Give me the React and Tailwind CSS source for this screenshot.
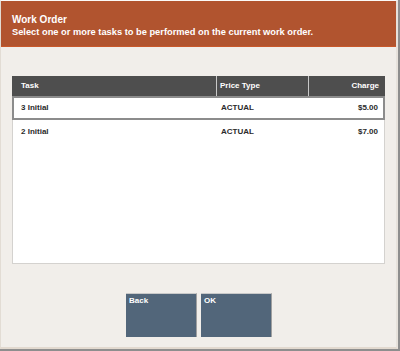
export default function App() {
  const font = { fontFamily: '"Liberation Sans", Arial, sans-serif' };
  return (
    <div className="w-[400px] h-[351px] bg-[#8e8e8e] flex" style={font}>
      <div className="w-[398px] h-[349px] flex flex-col bg-[#f1eeea] border-t border-t-[#fbfaf8] border-l border-l-[#e2dcd4] border-r-2 border-r-[#e7e2dc] border-b-2 border-b-[#e2d9cf]">
        <div className="h-[46px] bg-[#b1542f] border-b border-b-[#c9582a] px-[11px] pt-[13px] text-white font-bold leading-[12px]">
          <div className="text-[10px]">Work Order</div>
          <div className="text-[9.3px]">Select one or more tasks to be performed on the current work order.</div>
        </div>
        <div className="mt-[29px] ml-[11px] w-[373px] h-[188px] bg-white border border-[#d4d2cf] border-t-0 flex flex-col">
          <div className="h-[20px] bg-[#4e4e4e] text-white font-bold text-[8px] flex items-center -mx-px">
            <div className="w-[205px] pl-[9px] h-full flex items-center border-r border-r-[#c8c8c8]">Task</div>
            <div className="w-[92px] pl-[3px] h-full flex items-center border-r border-r-[#c8c8c8]">Price Type</div>
            <div className="flex-1 pr-[6px] h-full flex items-center justify-end">Charge</div>
          </div>
          <div className="h-[24px] flex items-center text-[8px] font-bold text-[#2a2a2a] border-2 border-[#8c8c8c] -mx-px">
            <div className="w-[203px] pl-[7px]">3 Initial</div>
            <div className="w-[92px] pl-[4px]">ACTUAL</div>
            <div className="flex-1 pr-[5px] text-right">$5.00</div>
          </div>
          <div className="h-[23px] flex items-center text-[8px] font-bold text-[#2a2a2a]">
            <div className="w-[204px] pl-[8px]">2 Initial</div>
            <div className="w-[92px] pl-[4px]">ACTUAL</div>
            <div className="flex-1 pr-[6px] text-right">$7.00</div>
          </div>
        </div>
        <div className="mt-[29px] flex justify-center gap-[4px] pl-[1px]">
          <div className="w-[71px] h-[44px] bg-[#52667a] border-t border-t-[#c9c9c9] border-r border-r-[#a0a0a0] text-white text-[8px] font-bold px-[3px] pt-[2px] leading-[10px]">Back</div>
          <div className="w-[71px] h-[44px] bg-[#52667a] border-t border-t-[#c9c9c9] border-r border-r-[#a0a0a0] text-white text-[8px] font-bold px-[3px] pt-[2px] leading-[10px]">OK</div>
        </div>
      </div>
    </div>
  );
}
